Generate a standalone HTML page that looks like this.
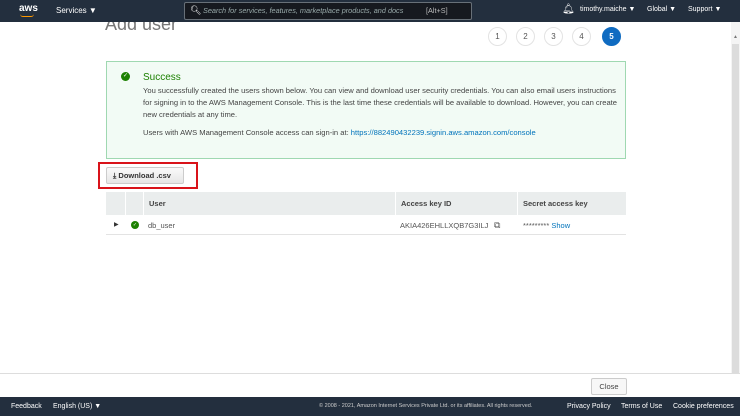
<!DOCTYPE html><html><head><style>
body{margin:0;width:740px;height:416px;overflow:hidden;background:#fff;font-family:"Liberation Sans",sans-serif;position:relative}
.a{position:absolute}
.nav{top:0;left:0;width:740px;height:22px;background:#232f3e;color:#fff;font-size:8px}
.step{width:17px;height:17px;border-radius:50%;border:1px solid #e3e3e3;font-size:8px;color:#555;text-align:center;line-height:17px;top:27px}
.ft{top:397px;left:0;width:740px;height:19px;background:#232f3e;color:#fff;font-size:7px;line-height:19px}
</style></head><body>
<div class="a nav">
<div class="a" style="left:19px;top:3px;font-weight:bold;font-size:10px">aws</div>
<div class="a" style="left:20px;top:14px;width:14px;height:2px;border-bottom:1px solid #f90;border-radius:0 0 6px 6px"></div>
<div class="a" style="left:56px;top:6px">Services ▼</div>
<div class="a" style="left:184px;top:2px;width:286px;height:16px;border:1px solid #687078;background:#16191f;border-radius:2px"></div>
<div class="a" style="left:190px;top:5px;font-size:9px">&#x1F50D;&#xFE0E;</div>
<div class="a" style="left:203px;top:6px;color:#9aa;font-style:italic;font-size:7.3px">Search for services, features, marketplace products, and docs</div>
<div class="a" style="left:426px;top:6px;color:#bbb;font-size:7.3px">[Alt+S]</div>
<div class="a" style="left:562px;top:4px;font-size:10px">&#x1F514;&#xFE0E;</div>
<div class="a" style="left:580px;top:6px;font-size:7px">timothy.maiche ▼</div>
<div class="a" style="left:647px;top:6px;font-size:7px">Global ▼</div>
<div class="a" style="left:688px;top:6px;font-size:7px">Support ▼</div>
</div>
<div class="a" style="left:105px;top:22px;height:17px;overflow:hidden;width:120px"><div style="margin-top:-8px;font-size:18px;color:#777">Add user</div></div>
<div class="a step" style="left:488px">1</div><div class="a step" style="left:516px">2</div><div class="a step" style="left:544px">3</div><div class="a step" style="left:572px">4</div>
<div class="a step" style="left:602px;background:#0f6bc1;border-color:#0f6bc1;color:#fff;font-weight:bold">5</div>
<div class="a" style="left:731px;top:22px;width:9px;height:351px;background:#f4f4f4"></div>
<div class="a" style="left:733px;top:34px;font-size:5px;color:#777">▲</div>
<div class="a" style="left:732px;top:44px;width:7px;height:329px;background:#dcdcdc"></div>
<div class="a" style="left:106px;top:61px;width:518px;height:96px;background:#f2fbf5;border:1px solid #9fd8b1"></div>
<div class="a" style="left:121px;top:72px;width:9px;height:9px;border-radius:50%;background:#1d8102;color:#fff;font-size:6px;text-align:center;line-height:9px">✓</div>
<div class="a" style="left:143px;top:72px;font-size:10px;color:#1d8102">Success</div>
<div class="a" style="left:143px;top:85px;width:480px;font-size:7.6px;line-height:12px;color:#444">You successfully created the users shown below. You can view and download user security credentials. You can also email users instructions for signing in to the AWS Management Console. This is the last time these credentials will be available to download. However, you can create new credentials at any time.</div>
<div class="a" style="left:143px;top:128px;font-size:7.6px;color:#444">Users with AWS Management Console access can sign-in at: <span style="color:#0073bb">https://882490432239.signin.aws.amazon.com/console</span></div>
<div class="a" style="left:98px;top:162px;border:2px solid #d9131a;box-sizing:border-box;width:100px;height:27px"></div>
<div class="a" style="left:106px;top:167px;width:78px;height:17px;background:linear-gradient(#fafafa,#e6e6e6);border:1px solid #ccc;border-radius:2px;box-sizing:border-box;font-size:7.5px;font-weight:bold;color:#333;line-height:15px;padding-left:6px">⤓ Download .csv</div>
<div class="a" style="left:106px;top:192px;width:520px;height:23px;background:#eaeded;font-size:7.5px;font-weight:bold;color:#444;line-height:23px">
<div class="a" style="left:19px;top:0;width:1px;height:23px;background:#fff"></div>
<div class="a" style="left:37px;top:0;width:1px;height:23px;background:#fff"></div>
<div class="a" style="left:43px">User</div>
<div class="a" style="left:289px;top:0;width:1px;height:23px;background:#fff"></div>
<div class="a" style="left:295px">Access key ID</div>
<div class="a" style="left:411px;top:0;width:1px;height:23px;background:#fff"></div>
<div class="a" style="left:417px">Secret access key</div>
</div>
<div class="a" style="left:106px;top:234px;width:520px;height:1px;background:#e3e3e3"></div>
<div class="a" style="left:114px;top:221px;font-size:6px;color:#333">▶</div>
<div class="a" style="left:131px;top:221px;width:8px;height:8px;border-radius:50%;background:#1d8102;color:#fff;font-size:5px;text-align:center;line-height:8px">✓</div>
<div class="a" style="left:148px;top:221px;font-size:7.5px;color:#555">db_user</div>
<div class="a" style="left:400px;top:221px;font-size:7.5px;color:#555">AKIA426EHLLXQB7G3ILJ</div>
<div class="a" style="left:494px;top:220px;font-size:9px;color:#555">⧉</div>
<div class="a" style="left:523px;top:221px;font-size:7.5px;color:#555">********* <span style="color:#0073bb">Show</span></div>
<div class="a" style="left:0;top:373px;width:740px;height:1px;background:#ddd"></div>
<div class="a" style="left:591px;top:378px;width:36px;height:17px;border:1px solid #ccc;border-radius:2px;background:#f7f7f7;box-sizing:border-box;font-size:7.5px;color:#444;text-align:center;line-height:15px">Close</div>
<div class="a ft">
<span class="a" style="left:11px">Feedback</span><span class="a" style="left:53px">English (US) ▼</span>
<span class="a" style="left:319px;font-size:5.5px;color:#ccc">© 2008 - 2021, Amazon Internet Services Private Ltd. or its affiliates. All rights reserved.</span>
<span class="a" style="left:567px">Privacy Policy</span><span class="a" style="left:621px">Terms of Use</span><span class="a" style="left:673px">Cookie preferences</span>
</div>
</body></html>
